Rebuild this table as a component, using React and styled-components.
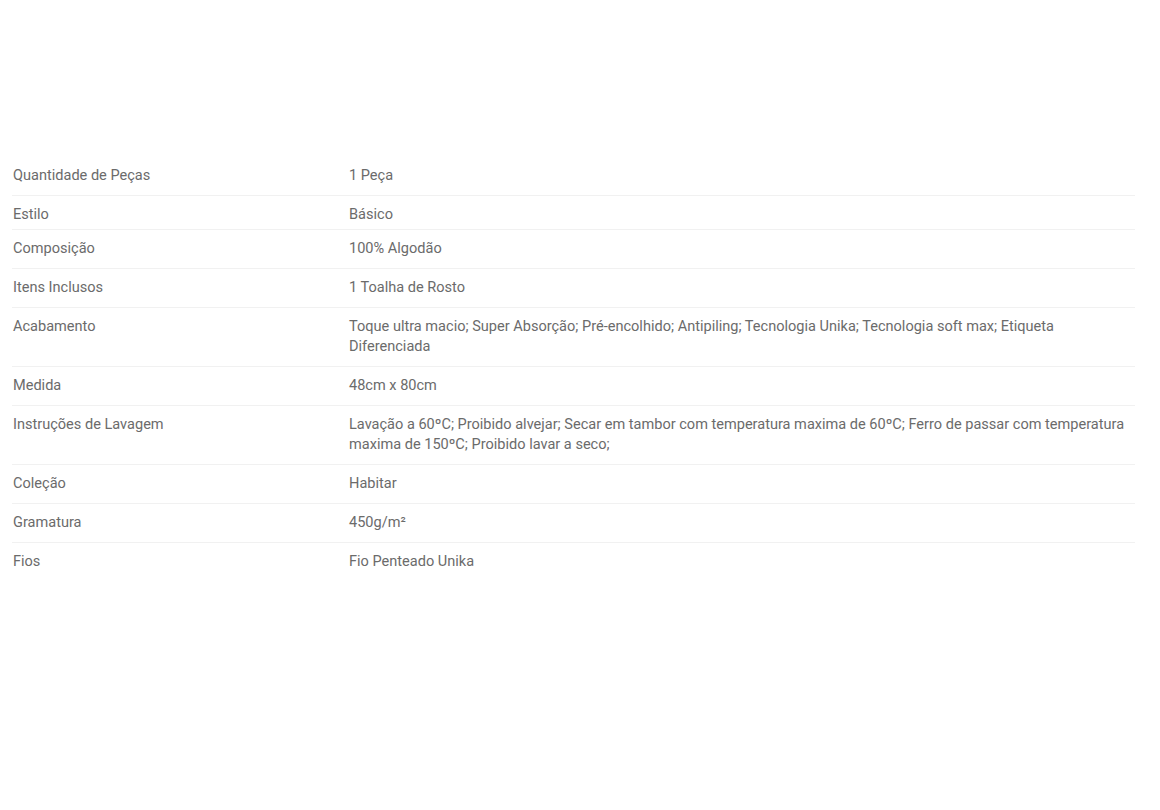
import React from 'react'
import styled, { createGlobalStyle } from 'styled-components';

const specs = [
  { label: 'Quantidade de Peças', value: '1 Peça' },
  { label: 'Estilo', value: 'Básico', tight: true },
  { label: 'Composição', value: '100% Algodão' },
  { label: 'Itens Inclusos', value: '1 Toalha de Rosto' },
  { label: 'Acabamento', value: 'Toque ultra macio; Super Absorção; Pré-encolhido; Antipiling; Tecnologia Unika; Tecnologia soft max; Etiqueta Diferenciada' },
  { label: 'Medida', value: '48cm x 80cm' },
  { label: 'Instruções de Lavagem', value: 'Lavação a 60ºC; Proibido alvejar; Secar em tambor com temperatura maxima de 60ºC; Ferro de passar com temperatura maxima de 150ºC; Proibido lavar a seco;' },
  { label: 'Coleção', value: 'Habitar' },
  { label: 'Gramatura', value: '450g/m²' },
  { label: 'Fios', value: 'Fio Penteado Unika', last: true },
];

function App() {
  return (
    <>
      <GlobalStyle />
      <Page>
        <SpecTable>
          {specs.map((s) => (
            <Row key={s.label} tight={s.tight} last={s.last}>
              <Label>{s.label}</Label>
              <Value>{s.value}</Value>
            </Row>
          ))}
        </SpecTable>
      </Page>
    </>
  )
}

const GlobalStyle = createGlobalStyle`
  body {
    margin: 0;
    background: #ffffff;
    font-family: Roboto, "Liberation Sans", sans-serif;
  }
`;

const Page = styled.div`
  width: 1160px;
  height: 810px;
  padding: 157px 25px 0 12px;
  box-sizing: border-box;
`;

const SpecTable = styled.div`
  display: flex;
  flex-direction: column;
`;

const Row = styled.div.withConfig({ shouldForwardProp: (p) => !['tight', 'last'].includes(p) })`
  display: grid;
  grid-template-columns: 337px 1fr;
  padding: 9px 0 ${(p) => (p.tight ? '4px' : '9px')};
  border-bottom: 1px solid ${(p) => (p.last ? 'transparent' : '#f1f1f1')};
  font-size: 14.55px;
  line-height: 20px;
  color: #6b6b6b;
`;

const Label = styled.div`
  padding-left: 1px;
`;

const Value = styled.div``;

export default App
